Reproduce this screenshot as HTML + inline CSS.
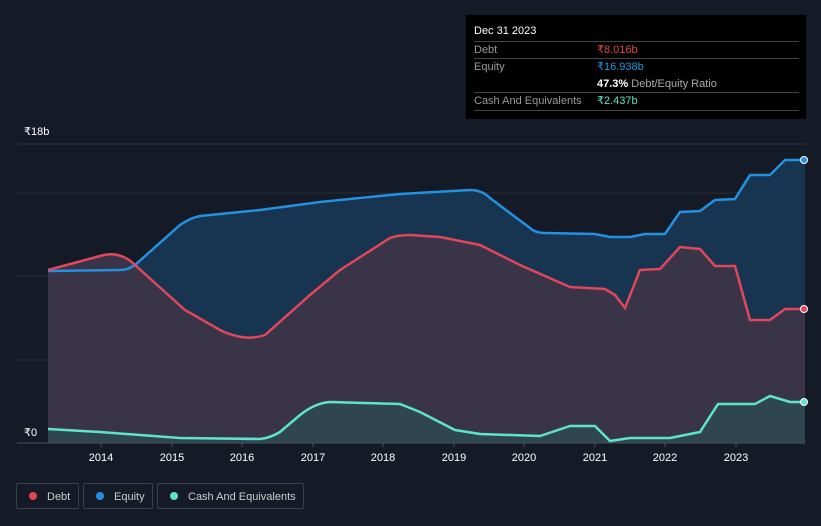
<!DOCTYPE html>
<html><head><style>
body{margin:0;width:821px;height:526px;background:#151b26;font-family:"Liberation Sans",sans-serif;overflow:hidden;position:relative}
.tip{position:absolute;left:466px;top:15px;width:340px;height:104px;background:#000;color:#fff;font-size:11px}
.row{position:absolute;left:8px;width:325px;border-top:1px solid #444;height:17px;line-height:17px}
.lab{color:#999}
.leg{position:absolute;top:483px;height:26px;border:1px solid #3a3f4a;border-radius:2px;color:#ccc;font-size:11px;line-height:26px;box-sizing:border-box;white-space:nowrap}
.dot{display:inline-block;width:8px;height:8px;border-radius:50%;margin:0 10px 0 12px}
</style></head><body>
<svg width="821" height="526" style="position:absolute;left:0;top:0">
<line x1="17" y1="144" x2="805" y2="144" stroke="#2e3440"/>
<line x1="17" y1="193" x2="805" y2="193" stroke="#262c38"/>
<line x1="17" y1="276" x2="805" y2="276" stroke="#262c38"/>
<line x1="17" y1="360" x2="805" y2="360" stroke="#262c38"/>
<path d="M48,271 L120,270 Q128,270 135,265 L180,225 Q190,218 200,216 L260,210 L320,202 L400,194 L470,190 Q482,190 490,198 L530,228 Q535,233 545,233 L595,234 L610,237 L630,237 L645,234 L665,234 L680,212 L700,211 L715,200 L735,199 L750,175 L770,175 L785,160 L805,160 L805,443 L48,443Z" fill="#173450"/>
<path d="M48,270 L100,256 Q120,250 135,265 L185,310 L220,330 Q245,342 265,335 L310,295 L340,270 L390,238 Q398,235 410,235 L440,237 L480,245 L520,265 L570,287 L605,289 L615,295 L625,308 L640,270 L660,269 L680,247 L700,249 L715,266 L735,266 L750,320 L770,320 L785,309 L805,309 L805,443 L48,443Z" fill="#3a3448"/>
<path d="M48,429 L100,432 L180,438 L260,439 Q270,438 280,432 L300,415 Q315,403 330,402 L400,404 L420,412 L455,430 L480,434 L540,436 L570,426 L595,426 L610,441 L630,438 L670,438 L700,432 L718,404 L755,404 L770,396 L790,402 L805,402 L805,443 L48,443Z" fill="#2f4650"/>
<path d="M48,271 L120,270 Q128,270 135,265 L180,225 Q190,218 200,216 L260,210 L320,202 L400,194 L470,190 Q482,190 490,198 L530,228 Q535,233 545,233 L595,234 L610,237 L630,237 L645,234 L665,234 L680,212 L700,211 L715,200 L735,199 L750,175 L770,175 L785,160 L805,160" fill="none" stroke="#2391e0" stroke-width="2.5"/>
<path d="M48,270 L100,256 Q120,250 135,265 L185,310 L220,330 Q245,342 265,335 L310,295 L340,270 L390,238 Q398,235 410,235 L440,237 L480,245 L520,265 L570,287 L605,289 L615,295 L625,308 L640,270 L660,269 L680,247 L700,249 L715,266 L735,266 L750,320 L770,320 L785,309 L805,309" fill="none" stroke="#e0475a" stroke-width="2.5"/>
<path d="M48,429 L100,432 L180,438 L260,439 Q270,438 280,432 L300,415 Q315,403 330,402 L400,404 L420,412 L455,430 L480,434 L540,436 L570,426 L595,426 L610,441 L630,438 L670,438 L700,432 L718,404 L755,404 L770,396 L790,402 L805,402" fill="none" stroke="#5ee3cc" stroke-width="2.5"/>
<circle cx="804" cy="160" r="3.5" fill="#2391e0" stroke="#fff"/>
<circle cx="804" cy="309" r="3.5" fill="#e0475a" stroke="#fff"/>
<circle cx="804" cy="402" r="3.5" fill="#5ee3cc" stroke="#fff"/>
<line x1="17" y1="443" x2="805" y2="443" stroke="#4a505c"/>
<rect x="17" y="422" width="30" height="20" fill="#151b26"/>
<g fill="#fff" font-size="11" font-family="Liberation Sans,sans-serif">
<text x="24" y="135">₹18b</text><text x="24" y="436">₹0</text>
<g text-anchor="middle"><text x="101" y="461">2014</text><text x="172" y="461">2015</text><text x="242" y="461">2016</text><text x="313" y="461">2017</text><text x="383" y="461">2018</text><text x="454" y="461">2019</text><text x="524" y="461">2020</text><text x="595" y="461">2021</text><text x="665" y="461">2022</text><text x="736" y="461">2023</text></g>
</g>
<g stroke="#4a505c"><line x1="101" y1="443" x2="101" y2="447"/><line x1="172" y1="443" x2="172" y2="447"/><line x1="242" y1="443" x2="242" y2="447"/><line x1="313" y1="443" x2="313" y2="447"/><line x1="383" y1="443" x2="383" y2="447"/><line x1="454" y1="443" x2="454" y2="447"/><line x1="524" y1="443" x2="524" y2="447"/><line x1="595" y1="443" x2="595" y2="447"/><line x1="665" y1="443" x2="665" y2="447"/><line x1="736" y1="443" x2="736" y2="447"/></g>
</svg>
<div class="tip">
<div style="position:absolute;left:8px;top:10px">Dec 31 2023</div>
<div class="row" style="top:26px"><span class="lab">Debt</span><span style="position:absolute;left:123px;color:#e0474a">₹8.016b</span></div>
<div class="row" style="top:43px"><span class="lab">Equity</span><span style="position:absolute;left:123px;color:#2391e0">₹16.938b</span></div>
<div style="position:absolute;left:131px;top:61px;line-height:17px"><b>47.3%</b> <span style="color:#aaa">Debt/Equity Ratio</span></div>
<div class="row" style="top:77px;border-bottom:1px solid #444"><span class="lab">Cash And Equivalents</span><span style="position:absolute;left:123px;color:#5ee3cc">₹2.437b</span></div>
</div>
<div class="leg" style="left:16px;width:63px"><span class="dot" style="background:#e0474a"></span>Debt</div>
<div class="leg" style="left:83px;width:70px"><span class="dot" style="background:#2391e0"></span>Equity</div>
<div class="leg" style="left:157px;width:147px"><span class="dot" style="background:#5ee3cc"></span>Cash And Equivalents</div>
</body></html>
